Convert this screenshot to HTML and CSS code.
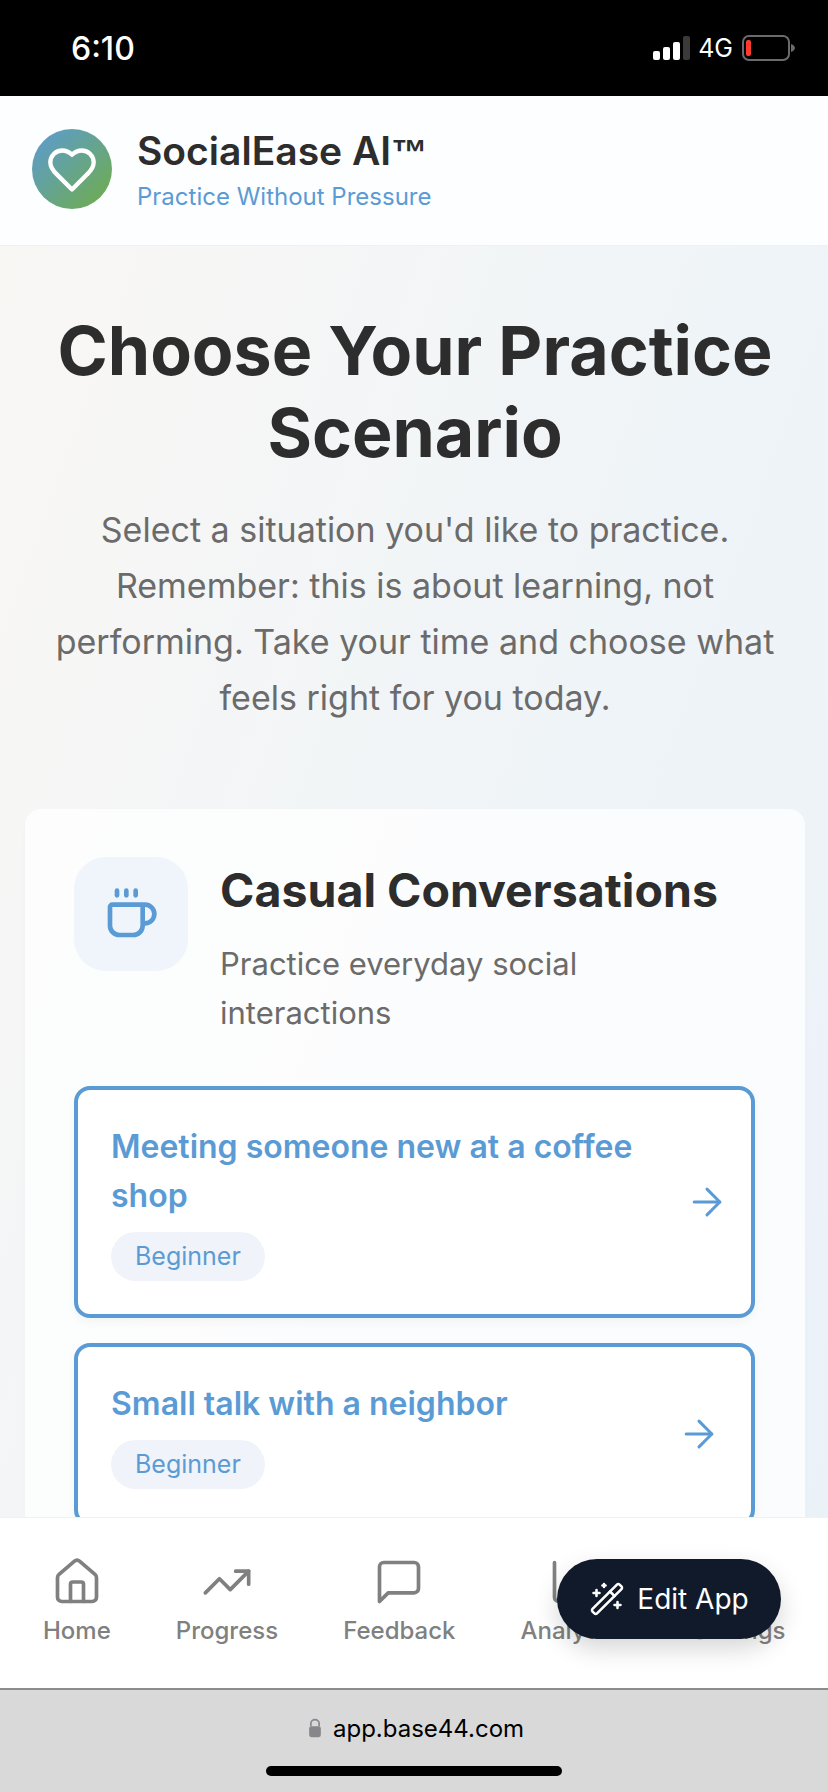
FILE: index.html
```html
<!DOCTYPE html>
<html lang="en">
<head>
    <meta charset="UTF-8">
    <meta name="viewport" content="width=device-width, initial-scale=1.0">
    <title>SocialEase AI</title>
    <link rel="stylesheet" href="styles.css">
</head>
<body>
    <div class="phone">
        <!-- Status bar -->
        <div class="status-bar">
            <span class="clock">6:10</span>
            <div class="status-right">
                <svg class="signal" width="38" height="24" viewBox="0 0 38 24">
                    <rect x="0" y="15" width="7" height="9" rx="2" fill="#fff"/>
                    <rect x="10" y="11" width="7" height="13" rx="2" fill="#fff"/>
                    <rect x="20" y="6" width="7" height="18" rx="2" fill="#fff"/>
                    <rect x="30" y="0" width="7" height="24" rx="2" fill="#3a3a3a"/>
                </svg>
                <span class="network">4G</span>
                <svg class="battery" width="53" height="26" viewBox="0 0 53 26">
                    <rect x="1" y="1" width="46" height="24" rx="6" fill="none" stroke="#6b6b6b" stroke-width="2"/>
                    <rect x="4" y="5" width="5" height="16" rx="2" fill="#ff3b30"/>
                    <path d="M49 9c2.500 1 4 2.500 4 4s-1.500 3-4 4z" fill="#6b6b6b"/>
                </svg>
            </div>
        </div>

        <!-- App header -->
        <header class="app-header">
            <div class="logo">
                <svg width="52" height="52" viewBox="0 0 24 24" fill="none" stroke="#fff" stroke-width="2" stroke-linecap="round" stroke-linejoin="round">
                    <path d="M19 14c1.490-1.460 3-3.210 3-5.500A5.500 5.500 0 0 0 16.500 3c-1.760 0-3 .5-4.500 2-1.500-1.500-2.740-2-4.500-2A5.500 5.500 0 0 0 2 8.500c0 2.300 1.500 4.050 3 5.500l7 7Z"/>
                </svg>
            </div>
            <div class="brand-text">
                <h1 class="brand">SocialEase AI<span class="tm">™</span></h1>
                <p class="tagline">Practice Without Pressure</p>
            </div>
        </header>

        <main class="content">
            <section class="intro">
                <h2>Choose Your Practice Scenario</h2>
                <p>Select a situation you'd like to practice. Remember: this is about learning, not performing. Take your time and choose what feels right for you today.</p>
            </section>

            <section class="category">
                <div class="category-head">
                    <div class="category-icon">
                        <svg width="56" height="56" viewBox="0 0 24 24" fill="none" stroke="#5b9bd5" stroke-width="2" stroke-linecap="round" stroke-linejoin="round">
                            <path d="M10 2v2"/>
                            <path d="M14 2v2"/>
                            <path d="M16 8a1 1 0 0 1 1 1v8a4 4 0 0 1-4 4H7a4 4 0 0 1-4-4V9a1 1 0 0 1 1-1h14a4 4 0 1 1 0 8h-1"/>
                            <path d="M6 2v2"/>
                        </svg>
                    </div>
                    <div>
                        <h3>Casual Conversations</h3>
                        <p>Practice everyday social interactions</p>
                    </div>
                </div>

                <div class="scenario">
                    <div class="scenario-text">
                        <h4>Meeting someone new at a coffee shop</h4>
                        <span class="badge">Beginner</span>
                    </div>
                    <svg class="arrow" width="44" height="44" viewBox="0 0 24 24" fill="none" stroke="#5b9bd5" stroke-width="1.640" stroke-linecap="round" stroke-linejoin="round">
                        <path d="M5 12h14"/>
                        <path d="m12 5 7 7-7 7"/>
                    </svg>
                </div>

                <div class="scenario">
                    <div class="scenario-text">
                        <h4>Small talk with a neighbor</h4>
                        <span class="badge">Beginner</span>
                    </div>
                    <svg class="arrow arrow-short" width="44" height="44" viewBox="0 0 24 24" fill="none" stroke="#5b9bd5" stroke-width="1.640" stroke-linecap="round" stroke-linejoin="round">
                        <path d="M5 12h14"/>
                        <path d="m12 5 7 7-7 7"/>
                    </svg>
                </div>
            </section>
        </main>

        <!-- Bottom navigation -->
        <nav class="tab-bar">
            <div class="tab">
                <svg width="52" height="52" viewBox="0 0 24 24" fill="none" stroke="#808080" stroke-width="1.700" stroke-linecap="round" stroke-linejoin="round">
                    <path d="M15 21v-8a1 1 0 0 0-1-1h-4a1 1 0 0 0-1 1v8"/>
                    <path d="M3 10a2 2 0 0 1 .709-1.528l7-5.999a2 2 0 0 1 2.582 0l7 5.999A2 2 0 0 1 21 10v9a2 2 0 0 1-2 2H5a2 2 0 0 1-2-2z"/>
                </svg>
                <span>Home</span>
            </div>
            <div class="tab">
                <svg width="52" height="52" viewBox="0 0 24 24" fill="none" stroke="#808080" stroke-width="1.700" stroke-linecap="round" stroke-linejoin="round">
                    <path d="M22 7 13.500 15.500 8.500 10.500 2 17"/>
                    <path d="M16 7h6v6"/>
                </svg>
                <span>Progress</span>
            </div>
            <div class="tab">
                <svg width="52" height="52" viewBox="0 0 24 24" fill="none" stroke="#808080" stroke-width="1.700" stroke-linecap="round" stroke-linejoin="round">
                    <path d="M21 15a2 2 0 0 1-2 2H7l-4 4V5a2 2 0 0 1 2-2h14a2 2 0 0 1 2 2z"/>
                </svg>
                <span>Feedback</span>
            </div>
            <div class="tab">
                <svg width="52" height="52" viewBox="0 0 24 24" fill="none" stroke="#808080" stroke-width="1.700" stroke-linecap="round" stroke-linejoin="round">
                    <path d="M3 3v16a2 2 0 0 0 2 2h16"/>
                    <path d="M18 17V9"/>
                    <path d="M13 17V5"/>
                    <path d="M8 17v-3"/>
                </svg>
                <span>Analytics</span>
            </div>
            <div class="tab">
                <svg width="52" height="52" viewBox="0 0 24 24" fill="none" stroke="#808080" stroke-width="1.700" stroke-linecap="round" stroke-linejoin="round">
                    <circle cx="12" cy="12" r="8"/>
                </svg>
                <span>Settings</span>
            </div>

            <button class="edit-app">
                <svg width="36" height="36" viewBox="0 0 24 24" fill="none" stroke="#fff" stroke-width="1.700" stroke-linecap="round" stroke-linejoin="round">
                    <path d="m21.640 3.640-1.280-1.280a1.210 1.210 0 0 0-1.720 0L2.360 18.640a1.210 1.210 0 0 0 0 1.720l1.280 1.280a1.200 1.200 0 0 0 1.720 0L21.640 5.360a1.200 1.200 0 0 0 0-1.720"/>
                    <path d="m14 7 3 3"/>
                    <path d="M5 6v4"/>
                    <path d="M19 14v4"/>
                    <path d="M10 2v2"/>
                    <path d="M7 8H3"/>
                    <path d="M21 16h-4"/>
                    <path d="M11 3H9"/>
                </svg>
                Edit App
            </button>
        </nav>

        <!-- Browser address bar -->
        <div class="address-bar">
            <div class="url">
                <svg width="14" height="20" viewBox="0 0 16 24">
                    <path d="M3 10V7a5 5 0 0 1 10 0v3" fill="none" stroke="#86868b" stroke-width="2"/>
                    <rect x="1" y="10" width="14" height="13" rx="2.500" fill="#86868b"/>
                </svg>
                <span>app.base44.com</span>
            </div>
            <div class="home-indicator"></div>
        </div>
    </div>
</body>
</html>
```

FILE: styles.css
```css
* {
    margin: 0;
    padding: 0;
    box-sizing: border-box;
}

body {
    font-family: Inter, "Liberation Sans", sans-serif;
    background: #fff;
}

.phone {
    width: 828px;
    height: 1792px;
    display: flex;
    flex-direction: column;
    overflow: hidden;
}

/* Status bar */
.status-bar {
    height: 96px;
    flex: none;
    background: #000;
    color: #fff;
    display: flex;
    justify-content: space-between;
    align-items: center;
    padding: 0 33px 0 71px;
}

.clock {
    font-size: 32px;
    font-weight: 500;
}

.status-right {
    display: flex;
    align-items: center;
    gap: 9px;
}

.signal {
    margin-right: -2px;
}

.network {
    font-size: 25px;
}

/* Header */
.app-header {
    height: 150px;
    flex: none;
    background: #fdfeff;
    border-bottom: 1px solid #eef2f7;
    display: flex;
    align-items: center;
    gap: 25px;
    padding: 0 32px 4px;
}

.logo {
    width: 80px;
    height: 80px;
    border-radius: 50%;
    background: linear-gradient(135deg, #5b9bd5, #70ad47);
    display: flex;
    justify-content: center;
    align-items: center;
}

.logo svg {
    margin-top: 2px;
}

.brand-text {
    margin-top: 5px;
}

.brand {
    font-size: 39px;
    font-weight: 600;
    line-height: 48px;
    color: #2d2d2d;
}

.tm {
    font-family: "Liberation Sans", sans-serif;
    font-size: 36px;
}

.tagline {
    font-size: 24px;
    line-height: 36px;
    margin-top: 2px;
    color: #5b9bd5;
}

/* Main content */
.content {
    flex: 1;
    min-height: 0;
    overflow: hidden;
    padding: 0 23px 0 25px;
    background: linear-gradient(110deg, #f9f7f4 0%, #eff4f8 60%, #ebf2f7 100%);
}

.intro {
    padding-top: 63px;
    text-align: center;
}

.intro h2 {
    font-size: 68px;
    font-weight: 700;
    line-height: 82px;
    color: #2d2d2d;
}

.intro p {
    margin-top: 29px;
    font-size: 34px;
    line-height: 56px;
    color: #6b6b6b;
}

/* Category card */
.category {
    margin-top: 83px;
    padding: 48px 50px 48px 49px;
    border-radius: 16px;
    background: rgba(255, 255, 255, 0.75);
    box-shadow: 0 4px 12px rgba(0, 0, 0, 0.01);
}

.category-head {
    display: flex;
    gap: 32px;
    margin-bottom: 49px;
}

.category-icon {
    width: 114px;
    height: 114px;
    flex: none;
    border-radius: 32px;
    background: #f0f5fb;
    display: flex;
    justify-content: center;
    align-items: center;
}

.category-head h3 {
    font-size: 46.500px;
    font-weight: 700;
    line-height: 66px;
    color: #2d2d2d;
}

.category-head p {
    margin-top: 16px;
    font-size: 31px;
    line-height: 49px;
    color: #6b6b6b;
}

/* Scenario rows */
.scenario {
    display: flex;
    justify-content: space-between;
    align-items: center;
    gap: 16px;
    margin-bottom: 25px;
    padding: 32px 32px 33px 33px;
    border: 4px solid #5b9bd5;
    border-radius: 16px;
    background: rgba(255, 255, 255, 0.85);
    box-shadow: 0 4px 10px rgba(0, 0, 0, 0.04);
}

.scenario h4 {
    font-size: 32px;
    font-weight: 600;
    line-height: 49px;
    color: #5b9bd5;
}

.badge {
    display: inline-block;
    margin-top: 12px;
    padding: 0 24px;
    height: 49px;
    line-height: 49px;
    border-radius: 25px;
    font-size: 25px;
    color: #5b9bd5;
    background: #f0f4fa;
}

.arrow {
    flex: none;
    margin-right: -10px;
}

.arrow-short {
    margin-right: -2px;
}

/* Bottom navigation */
.tab-bar {
    position: relative;
    height: 171px;
    flex: none;
    background: #fff;
    border-top: 1px solid #eef2f7;
    display: flex;
    gap: 65px;
    padding: 38px 0 0 43px;
}

.tab {
    display: flex;
    flex-direction: column;
    align-items: center;
    gap: 8px;
    font-size: 24px;
    font-weight: 500;
    color: #808080;
}

.edit-app {
    position: absolute;
    left: 557px;
    top: 41px;
    width: 224px;
    height: 80px;
    border: none;
    border-radius: 40px;
    background: #111a2b;
    color: #fff;
    font-family: inherit;
    font-size: 28px;
    font-weight: 400;
    display: flex;
    justify-content: center;
    align-items: center;
    gap: 12px;
    box-shadow: 0 10px 24px rgba(0, 0, 0, 0.16);
}

/* Address bar */
.address-bar {
    height: 104px;
    flex: none;
    background: #d9d9d9;
    border-top: 2px solid #8c8c8c;
    display: flex;
    flex-direction: column;
    align-items: center;
}

.url {
    display: flex;
    align-items: center;
    gap: 11px;
    margin: 20px 0 0 4px;
    height: 36px;
    font-size: 24px;
    color: #000;
}

.home-indicator {
    width: 296px;
    height: 10px;
    margin-top: 20px;
    border-radius: 5px;
    background: #000;
}
```
